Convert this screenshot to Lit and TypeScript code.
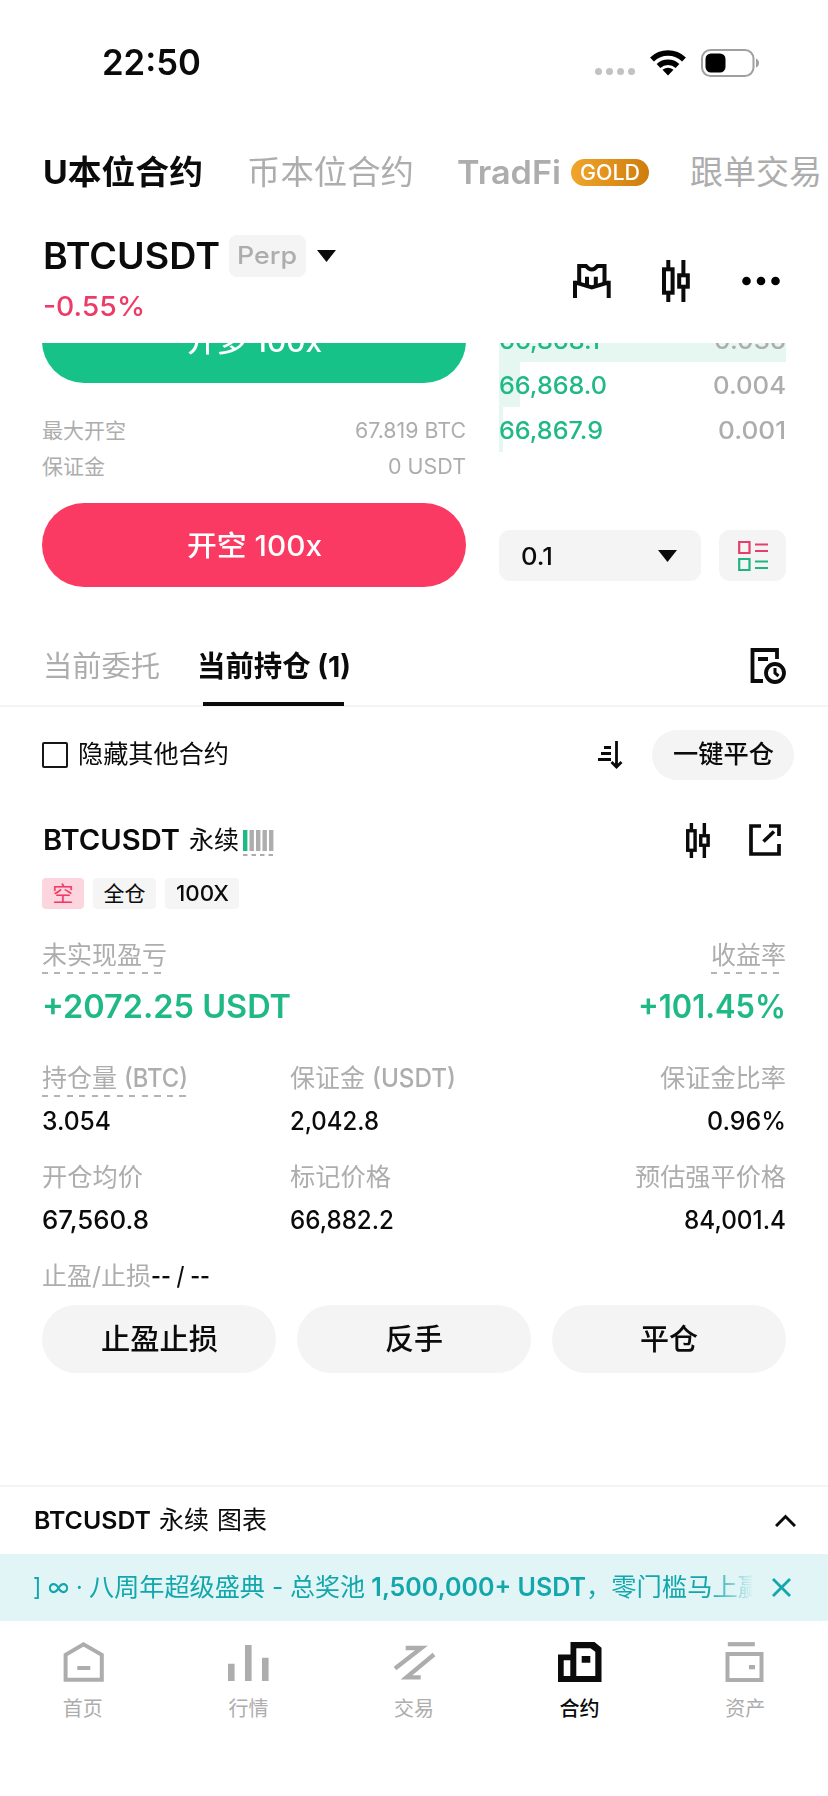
import { LitElement, html, css, svg } from "lit";
import { customElement, property } from "lit/decorators.js";
import { styleMap } from "lit/directives/style-map.js";

/** Text run stretched horizontally so that it fills a given width. */
@customElement("fit-text")
class FitText extends LitElement {
  @property() text = "";
  @property({ type: Number }) w = 0;
  static styles = css`
    :host { display: inline-block; white-space: pre; flex: none; }
    .run { display: inline-block; transform-origin: 0 50%; }
  `;
  render() {
    return html`<span class="run">${this.text}</span>`;
  }
  updated() {
    const run = this.renderRoot.querySelector(".run") as HTMLElement;
    const fit = () => {
      run.style.transform = "none";
      run.style.marginRight = "0px";
      const natural = run.offsetWidth ? run.getBoundingClientRect().width : this.w;
      run.style.transform = `scaleX(${(this.w / natural).toFixed(4)})`;
      run.style.marginRight = (this.w - natural).toFixed(2) + "px";
    };
    fit();
    document.fonts.ready.then(fit);
  }
}

const t = (text: string, w: number, cls = "") =>
  html`<fit-text class=${cls} .text=${text} .w=${w}></fit-text>`;

const candles = (w: number, h: number, cls = "") => html`
  <svg class=${cls} width=${w} height=${h} viewBox="0 0 28 42" fill="none" stroke="#0b0b0b" stroke-width="4" preserveAspectRatio="none">
    <path d="M6.3 0V8M6.3 34V42M21.4 0V14M21.4 28V42" />
    <rect x="2" y="9.3" width="8.600" height="23.400" />
    <rect x="17.200" y="15.300" width="8.600" height="11.400" />
  </svg>`;

const caret = html`<svg width="19" height="12" viewBox="0 0 19 12"><path d="M0 0H19L9.500 12Z" fill="#0b0b0b" /></svg>`;

const nav = [
  { label: "首页", icon: svg`<path d="M4.600 38.800V13.800L22.500 3.300L40.800 13.800V38.800Z" fill="none" stroke="#adadad" stroke-width="4"/><path d="M16.300 27H29.300" stroke="#adadad" stroke-width="4"/>` },
  { label: "行情", icon: svg`<path d="M5.300 22.700V40M22.300 4V40M39.300 16.700V40" stroke="#adadad" stroke-width="6.600"/>` },
  { label: "交易", icon: svg`<path d="M13.700 7H29.500L3 27.500M42 13.500L14.500 36.300H28.700" fill="none" stroke="#adadad" stroke-width="4.300"/>` },
  { label: "合约", icon: svg`<path fill="#0b0b0b" fill-rule="evenodd" d="M12.500 1H36.500L43.500 6.700V41H0V13.500H12.500ZM5.700 19.300V35H12.300V19.300ZM18.300 7.300V35H37.300V10.700L32.500 7.300ZM23.700 15H32.300V21.700H23.700Z"/>`, on: true },
  { label: "资产", icon: svg`<path d="M4.800 3.200H31.800" stroke="#adadad" stroke-width="4.200"/><rect x="4.500" y="13" width="34" height="26" fill="none" stroke="#adadad" stroke-width="4"/><rect x="26" y="24" width="6" height="4.300" fill="#adadad"/>` },
];

const book = [
  { price: "66,868.1", pw: 101, qty: "0.036", qw: 72, depth: 100 },
  { price: "66,868.0", pw: 108, qty: "0.004", qw: 73, depth: 7.3 },
  { price: "66,867.9", pw: 104, qty: "0.001", qw: 68, depth: 1.4 },
];

@customElement("app-root")
class AppRoot extends LitElement {
  static styles = css`
    :host {
      display: flex; flex-direction: column; width: 828px; height: 1796px; overflow: hidden;
      background: #fff; color: #0b0b0b; font-family: Inter, "Noto Sans CJK SC", sans-serif;
      font-size: 25px; line-height: 1; font-weight: 400;
    }
    * { box-sizing: border-box; }
    svg { display: block; flex: none; }
    .row { display: flex; align-items: center; }
    .between { display: flex; align-items: center; justify-content: space-between; }
    .grow { flex: 1; }
    .g { color: #adadad; }
    .m { font-weight: 500; }
    .sb { font-weight: 600; }

    .status { height: 125px; padding: 0 69px 0 102px; }
    .time { font-size: 35.500px; font-weight: 600; }
    .sys { display: flex; align-items: center; gap: 15px; }
    .dots { display: flex; gap: 4px; padding-top: 18px; }
    .dots i { width: 7px; height: 7px; border-radius: 50%; background: #c2c2c2; }

    .tabs { height: 94px; padding-left: 43px; font-size: 33px; white-space: nowrap; overflow: hidden; font-weight: 600; color: #adadad; }
    .tabs .on { color: #0b0b0b; font-weight: 700; margin-right: 44px; }
    .tabs .coin { margin-right: 43px; font-weight: 400; }
    .tabs .copy { font-weight: 400; margin-left: 41px; }
    .gold { width: 78px; height: 27px; margin-left: 10px; border-radius: 14px; color: #fff; font-size: 21px; font-weight: 500; background: linear-gradient(90deg, #f0a52c, #ce7d0c); display: flex; align-items: center; justify-content: center; }

    .head { height: 124px; padding: 14px 48px 0 43px; display: flex; justify-content: space-between; }
    .pair { font-size: 36.500px; font-weight: 600; }
    .line1 { display: flex; align-items: center; height: 46px; }
    .perp { width: 77px; height: 42px; margin: 0 11px 0 9px; border-radius: 8px; background: #f4f4f4; color: #adadad; font-size: 24px; font-weight: 500; display: flex; align-items: center; justify-content: center; }
    .chg { margin-top: 14px; font-size: 27.500px; color: #ee3a67; font-weight: 500; }
    .tools { display: flex; align-items: center; height: 95px; }
    .tools .kline { margin: 0 52px 0 51px; }

    .trade { height: 262px; display: flex; justify-content: space-between; padding: 0 42px; overflow: hidden; }
    .side { width: 424px; display: flex; flex-direction: column; }
    .btn { height: 84px; border-radius: 42px; color: #fff; font-size: 28px; font-weight: 500; display: flex; flex: none; align-items: center; justify-content: center; }
    .btn fit-text { padding-top: 1px; }
    .long { background: #16c287; margin-top: -44px; }
    .short { background: #fa3a62; margin-top: 19px; }
    .info { font-size: 21px; color: #adadad; height: 36px; flex: none; }
    .info.first { margin-top: 29px; }
    .right { width: 287px; }
    .book { margin-top: -26px; }
    .lvl { height: 45px; padding-top: 2px; position: relative; font-size: 24.500px; color: #adadad; font-weight: 500; }
    .lvl .price { color: #1fb985; }
    .lvl > fit-text { position: relative; }
    .bar { position: absolute; inset: 0 auto 0 0; background: #e6f7f1; }
    .ctl { margin-top: 78px; display: flex; justify-content: space-between; }
    .sel { width: 202px; height: 51px; border-radius: 11px; background: #f4f4f4; padding: 1px 24px 0 22px; font-size: 24.500px; font-weight: 500; }
    .view { width: 67px; height: 51px; border-radius: 11px; background: #f4f4f4; display: flex; align-items: center; justify-content: center; }

    .ptabs { height: 102px; border-bottom: 2px solid #f4f4f4; padding: 20px 42px 0 43px; font-size: 29px; display: flex; align-items: flex-start; }
    .ptab { height: 81px; display: flex; align-items: center; flex: none; padding-top: 1px; }
    .ptab.cur { margin-left: 37px; font-weight: 700; position: relative; }
    .ptab.cur::after { content: ""; position: absolute; left: 6px; width: 141px; bottom: 0; height: 4px; background: #0b0b0b; }
    .ptabs svg { margin-top: 23px; }

    .filter { height: 95px; padding: 0 34px 0 42px; }
    .box { width: 26px; height: 26px; border: 2px solid #161616; border-radius: 2px; margin-right: 10px; }
    .closeall { width: 142px; height: 50px; margin-left: 29px; border-radius: 25px; background: #f4f4f4; font-weight: 500; display: flex; align-items: center; justify-content: center; }

    .pos { padding: 0 42px; height: 683px; display: flex; flex-direction: column; }
    .sym { height: 76px; padding: 0 5px 0 1px; font-size: 28px; }
    .sym .cn { font-size: 25px; margin-left: 9px; }
    .sym .share { margin-left: 39px; }
    .adl { padding-top: 5px; margin-left: 4px; }
    .tags { height: 31px; gap: 9px; font-size: 21px; }
    .tag { height: 31px; padding: 0 10.500px; border-radius: 4px; background: #f5f5f5; display: flex; align-items: center; }
    .tag.red { background: #fdd5de; color: #ee3a67; }
    .pl { height: 30px; margin-top: 34px; color: #adadad; display: flex; justify-content: space-between; align-items: flex-start; }
    .dash { padding-bottom: 6px; background: repeating-linear-gradient(90deg, #b4b4b4 0 6px, transparent 6px 12.500px) left bottom / 100% 2px no-repeat; }
    .pv { margin-top: 17px; height: 33px; font-size: 32px; font-weight: 600; color: #1fb985; }
    .grid { display: grid; grid-template-columns: 248px 1fr auto; margin-top: 43px; }
    .cell { height: 99px; display: flex; flex-direction: column; align-items: flex-start; }
    .cell.r { align-items: flex-end; }
    .lab { height: 32px; color: #adadad; display: flex; align-items: flex-start; }
    .val { margin-top: 11px; font-weight: 500; height: 25px; }
    .tpsl { height: 26px; margin-top: -1px; color: #adadad; }
    .tpsl .v { color: #0b0b0b; font-weight: 500; }
    .acts { margin-top: 16px; display: flex; gap: 21px; }
    .act { flex: 1; height: 68px; border-radius: 34px; background: #f4f4f4; font-size: 29px; font-weight: 500; display: flex; align-items: center; justify-content: center; }

    .chart { height: 69px; border-top: 2px solid #f4f4f4; padding: 0 32px 0 34px; gap: 8px; }
    .chart .sb { font-size: 24.500px; }
    .notice { height: 67px; background: #e1f5f7; color: #13a7ab; padding: 0 37px 0 33px; }
    .marq { width: 719px; overflow: hidden; white-space: nowrap; display: flex; mask-image: linear-gradient(90deg, #000 675px, transparent 722px); }
    .nav { display: grid; grid-template-columns: repeat(5, 1fr); padding-top: 20px; }
    .item { display: flex; flex-direction: column; align-items: center; gap: 14px; color: #adadad; font-size: 20px; }
    .item.on { color: #0b0b0b; font-weight: 500; }
  `;

  cell(label: unknown, value: unknown, right = false) {
    return html`<div class="cell ${right ? "r" : ""}"><div class="lab">${label}</div><div class="val">${value}</div></div>`;
  }

  render() {
    return html`
      <div class="status between">
        ${t("22:50", 99, "time")}
        <div class="sys">
          <div class="dots"><i></i><i></i><i></i><i></i></div>
          <svg width="36" height="27" viewBox="0 0 36 27" fill="none" stroke="#000" stroke-width="5.500">
            <path d="M2 10.500A23 23 0 0 1 34 10.500" /><path d="M8.500 17A14 14 0 0 1 27.500 17" />
            <path d="M12.500 20.800Q18 16.500 23.500 20.800L18 26.500Z" fill="#000" stroke="none" />
          </svg>
          <svg width="58" height="28" viewBox="0 0 58 28">
            <rect x="1" y="1" width="51.500" height="26" rx="8.500" fill="none" stroke="#a0a0a0" stroke-width="2" />
            <rect x="4.500" y="4.500" width="20" height="19" rx="5.500" /><path d="M55 9.500Q58 11 58 14T55 18.500Z" fill="#a0a0a0" />
          </svg>
        </div>
      </div>

      <div class="tabs row">
        ${t("U本位合约", 160, "on")}${t("币本位合约", 167, "coin")}${t("TradFi", 104)}
        <span class="gold">${t("GOLD", 60)}</span>${t("跟单交易", 132, "copy")}
      </div>

      <div class="head">
        <div>
          <div class="line1">${t("BTCUSDT", 177, "pair")}<span class="perp">${t("Perp", 60)}</span>${caret}</div>
          <div class="chg">${t("-0.55%", 102)}</div>
        </div>
        <div class="tools">
          <svg width="38" height="34" viewBox="0 0 38 34" fill="none" stroke="#0b0b0b" stroke-width="4">
            <path d="M2 34V16.800M35.700 34V16.800M2 18.300L18.800 23.500L35.700 18.300" />
            <path d="M6.200 20V2H13Q18.800 9 24.500 2H31.500V20M14 12.700V22M22.800 12.700V22" />
          </svg>
          ${candles(28, 42, "kline")}
          <svg width="38" height="10" viewBox="0 0 38 10"><circle cx="4.500" cy="5" r="4.300" /><circle cx="19" cy="5" r="4.300" /><circle cx="33.500" cy="5" r="4.300" /></svg>
        </div>
      </div>

      <div class="trade">
        <div class="side">
          <div class="btn long">${t("开多 100x", 135)}</div>
          <div class="info first between">${t("最大开空", 84)}${t("67.819 BTC", 111)}</div>
          <div class="info between">${t("保证金", 63)}${t("0 USDT", 78)}</div>
          <div class="btn short">${t("开空 100x", 135)}</div>
        </div>
        <div class="right">
          <div class="book">
            ${book.map((b) => html`<div class="lvl between">
              <div class="bar" style=${styleMap({ width: b.depth + "%" })}></div>
              ${t(b.price, b.pw, "price")}${t(b.qty, b.qw)}
            </div>`)}
          </div>
          <div class="ctl">
            <div class="sel between">${t("0.1", 32)}${caret}</div>
            <div class="view">
              <svg width="30" height="32" viewBox="0 0 30 32" fill="none" stroke-width="2.200">
                <path d="M1.200 2H11.500V13H1.200ZM17 4.500H30M17 11H30" stroke="#e43f6c" /><path d="M1.200 19H11.500V30H1.200ZM17 21.500H30M17 28H30" stroke="#1fb482" />
              </svg>
            </div>
          </div>
        </div>
      </div>

      <div class="ptabs">
        <div class="ptab g">${t("当前委托", 117)}</div>
        <div class="ptab cur">${t("当前持仓 (1)", 154)}</div>
        <div class="grow"></div>
        <svg width="36" height="36" viewBox="0 0 36 36" fill="none" stroke="#0b0b0b" stroke-width="3.800">
          <path d="M13 33H2.500V2H27V11M8 11H18" /><circle cx="25" cy="25" r="9" /><path d="M25 20V25L28.500 28" stroke-width="3" />
        </svg>
      </div>

      <div class="filter row">
        <span class="box"></span>${t("隐藏其他合约", 151)}
        <span class="grow"></span>
        <svg width="25" height="28" viewBox="0 0 25 28" fill="none" stroke="#0b0b0b" stroke-width="2.800">
          <path d="M6 6.500H13M3 12.500H13M0 18.500H13M18.500 0V26M13.500 21L18.500 26L23.500 21" />
        </svg>
        <span class="closeall">${t("一键平仓", 101)}</span>
      </div>

      <div class="pos">
        <div class="sym row">
          ${t("BTCUSDT", 137, "sb")}${t("永续", 50, "cn")}
          <span class="adl">
            <svg width="31" height="26" viewBox="0 0 31 26">
              <path d="M2.200 0V21" stroke="#1fb985" stroke-width="4.400" /><path d="M8.700 0V21M15.200 0V21M21.700 0V21M28.200 0V21" stroke="#adadad" stroke-width="4.400" />
              <path d="M0 25H31" stroke="#adadad" stroke-width="1.800" stroke-dasharray="4.500 4" />
            </svg>
          </span>
          <span class="grow"></span>
          ${candles(24, 35)}
          <svg class="share" width="32" height="32" viewBox="0 0 32 32" fill="none" stroke="#0b0b0b" stroke-width="3.700">
            <path d="M12 2H2V30H30V20M20 2H30V12" /><path d="M14.500 17.500L25 7.500" />
          </svg>
        </div>
        <div class="tags row">
          <span class="tag red">${t("空", 21)}</span><span class="tag">${t("全仓", 42)}</span><span class="tag m">${t("100X", 53)}</span>
        </div>
        <div class="pl">${t("未实现盈亏", 125, "dash")}${t("收益率", 75, "dash")}</div>
        <div class="pv between">${t("+2072.25 USDT", 249)}${t("+101.45%", 148)}</div>
        <div class="grid">
          ${this.cell(html`<span class="dash row">${t("持仓量 ", 82)}${t("(BTC)", 64, "m")}</span>`, t("3.054", 69))}
          ${this.cell(html`${t("保证金 ", 82)}${t("(USDT)", 84, "m")}`, t("2,042.8", 89))}
          ${this.cell(t("保证金比率", 126), t("0.96%", 79), true)}
          ${this.cell(t("开仓均价", 101), t("67,560.8", 107))}
          ${this.cell(t("标记价格", 101), t("66,882.2", 104))}
          ${this.cell(t("预估强平价格", 151), t("84,001.4", 102), true)}
        </div>
        <div class="tpsl row">${t("止盈/止损", 109)}${t("-- / --", 59, "v")}</div>
        <div class="acts">
          <div class="act">${t("止盈止损", 117)}</div><div class="act">${t("反手", 58)}</div><div class="act">${t("平仓", 58)}</div>
        </div>
      </div>

      <div class="chart row">
        ${t("BTCUSDT", 117, "sb")}${t("永续", 50)}${t("图表", 50)}
        <span class="grow"></span>
        <svg width="21" height="13" viewBox="0 0 21 13" fill="none" stroke="#0b0b0b" stroke-width="3"><path d="M1 12L10.500 2.500L20 12" /></svg>
      </div>
      <div class="notice between">
        <div class="marq">${t("] ∞ · ", 56)}${t("八周年超级盛典", 176)}${t(" - ", 25)}${t("总奖池", 75)}${t(" 1,500,000+ USDT", 221, "sb")}${t("，零门槛马上赢", 177)}</div>
        <svg width="19" height="19" viewBox="0 0 19 19" stroke="#13a7ab" stroke-width="2.800"><path d="M1 1L18 18M18 1L1 18" /></svg>
      </div>
      <div class="nav">
        ${nav.map((n) => html`<div class="item ${n.on ? "on" : ""}">
          <svg width="44" height="44" viewBox="0 0 44 44">${n.icon}</svg>${t(n.label, 40)}
        </div>`)}
      </div>
    `;
  }
}
